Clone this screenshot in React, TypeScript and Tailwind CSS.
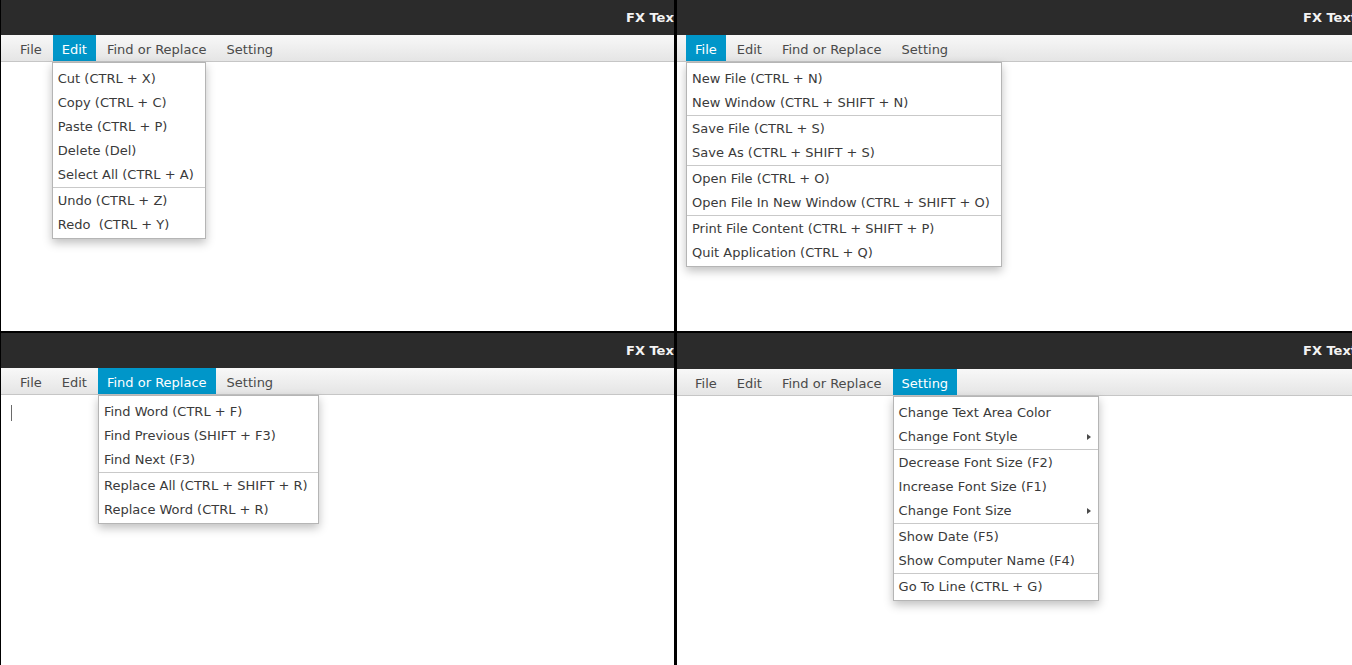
import React from 'react';

type Item = { label: string; sub?: boolean };
type Menu = { name: string; width: string; shift: string; groups: Item[][] };

const MENUS: Record<string, Menu> = {
  File: {
    name: 'File',
    width: 'w-[316px]',
    shift: 'left-0',
    groups: [
      [{ label: 'New File (CTRL + N)' }, { label: 'New Window (CTRL + SHIFT + N)' }],
      [{ label: 'Save File (CTRL + S)' }, { label: 'Save As (CTRL + SHIFT + S)' }],
      [{ label: 'Open File (CTRL + O)' }, { label: 'Open File In New Window (CTRL + SHIFT + O)' }],
      [{ label: 'Print File Content (CTRL + SHIFT + P)' }, { label: 'Quit Application (CTRL + Q)' }],
    ],
  },
  Edit: {
    name: 'Edit',
    width: 'w-[154px]',
    shift: 'left-[-1px]',
    groups: [
      [
        { label: 'Cut (CTRL + X)' },
        { label: 'Copy (CTRL + C)' },
        { label: 'Paste (CTRL + P)' },
        { label: 'Delete (Del)' },
        { label: 'Select All (CTRL + A)' },
      ],
      [{ label: 'Undo (CTRL + Z)' }, { label: 'Redo  (CTRL + Y)' }],
    ],
  },
  'Find or Replace': {
    name: 'Find or Replace',
    width: 'w-[221px]',
    shift: 'left-0',
    groups: [
      [{ label: 'Find Word (CTRL + F)' }, { label: 'Find Previous (SHIFT + F3)' }, { label: 'Find Next (F3)' }],
      [{ label: 'Replace All (CTRL + SHIFT + R)' }, { label: 'Replace Word (CTRL + R)' }],
    ],
  },
  Setting: {
    name: 'Setting',
    width: 'w-[206px]',
    shift: 'left-0',
    groups: [
      [{ label: 'Change Text Area Color' }, { label: 'Change Font Style', sub: true }],
      [{ label: 'Decrease Font Size (F2)' }, { label: 'Increase Font Size (F1)' }, { label: 'Change Font Size', sub: true }],
      [{ label: 'Show Date (F5)' }, { label: 'Show Computer Name (F4)' }],
      [{ label: 'Go To Line (CTRL + G)' }],
    ],
  },
};

const BAR = ['File', 'Edit', 'Find or Replace', 'Setting'];

const Dropdown: React.FC<{ menu: Menu }> = ({ menu }) => (
  <div
    className={`absolute top-[27px] ${menu.shift} ${menu.width} bg-white border border-[#b5b5b5] pt-[4px] pb-[1px] shadow-[0_4px_9px_rgba(0,0,0,0.25)] z-20`}
  >
    {menu.groups.map((group, gi) => (
      <div key={gi}>
        {gi > 0 && <div className="h-[2px] border-t border-[#c9c9c9]" />}
        {group.map((item) => (
          <div key={item.label} className="h-[24px] flex items-center justify-between pl-[5px] pr-[7px] whitespace-pre text-[#3a3a3a]">
            <span>{item.label}</span>
            {item.sub && (
              <span className="w-0 h-0 border-y-[3.5px] border-y-transparent border-l-[4px] border-l-[#4a4a4a]" />
            )}
          </div>
        ))}
      </div>
    ))}
  </div>
);

const Window: React.FC<{ open: string; edge?: boolean; caret?: boolean; tall?: boolean }> = ({ open, edge, caret, tall }) => (
  <div className={`flex flex-col bg-white overflow-hidden ${edge ? 'border-l border-black' : ''}`}>
    <div
      className={`${tall ? 'h-[36px]' : 'h-[35px]'} shrink-0 flex items-center overflow-hidden bg-[#2b2b2b] ${edge ? 'pl-[625px]' : 'pl-[626px]'}`}
    >
      <span className="shrink-0 whitespace-nowrap font-bold text-[13px] text-[#f3f3f3]">FX Text Editor</span>
    </div>
    <div
      className={`h-[27px] shrink-0 flex items-stretch gap-[2px] ${edge ? 'pl-[10px]' : 'pl-[9px]'} bg-linear-to-b from-[#f8f8f8] to-[#e5e5e5] border-b border-[#c6c6c6] relative z-10`}
    >
      {BAR.map((name) => (
        <div
          key={name}
          className={`relative flex items-center px-[9px] pt-[3px] whitespace-nowrap ${name === open ? 'bg-[#0096c9] text-white' : 'text-[#4a4a4a]'}`}
        >
          {name}
          {name === open && <Dropdown menu={MENUS[name]} />}
        </div>
      ))}
    </div>
    <div className="flex-1 relative pl-[10px] pt-[10px]">
      {caret && <div className="w-[1px] h-[16px] bg-[#6a6a6a]" />}
    </div>
  </div>
);

const App: React.FC = () => {
  return (
    <div className="w-[1352px] h-[665px] overflow-hidden bg-black grid grid-cols-[674px_675px] grid-rows-[331px_332px] gap-x-[3px] gap-y-[2px] font-['DejaVu_Sans',sans-serif] text-[13px]">
      <Window open="Edit" edge />
      <Window open="File" />
      <Window open="Find or Replace" edge caret />
      <Window open="Setting" tall />
    </div>
  );
};

export default App;
